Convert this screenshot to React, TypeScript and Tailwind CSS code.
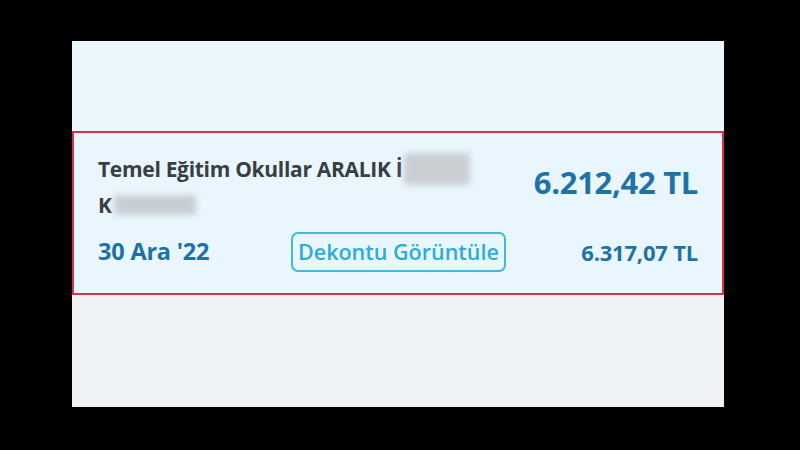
export default function App() {
  return (
    <div className="w-[800px] h-[450px] bg-black pl-[72px] pt-[41px]" style={{ fontFamily: '"Open Sans", "Noto Sans", sans-serif' }}>
      <div className="w-[652px] h-[366px] flex flex-col">
        {/* top strip */}
        <div className="h-[90px] bg-[#eaf7fd]" />

        {/* highlighted row */}
        <div className="h-[164px] bg-[#e9f6fd] border-2 border-[#d8304d] px-[24px] pt-[18px] flex flex-col">
          <div className="flex justify-between">
            <div className="text-[21px] leading-[36px] font-bold text-[#383e43] w-[380px] tracking-[-0.3px]">
              <div className="flex items-center whitespace-nowrap">
                Temel Eğitim Okullar ARALIK İ
                <span className="inline-block w-[66px] h-[32px] ml-[2px] bg-[#c9ced3] blur-[3px] rounded" />
              </div>
              <div className="flex items-center">
                K
                <span className="inline-block w-[82px] h-[20px] ml-[2px] bg-[#c9ced3] blur-[3px] rounded" />
              </div>
            </div>
            <div className="text-[31px] font-bold text-[#1f72a8] pt-[13px] leading-[36px] tracking-[-0.3px]">6.212,42 TL</div>
          </div>
          <div className="flex items-center justify-between mt-[9px]">
            <div className="text-[23.5px] font-bold text-[#1c72a8] w-[193px] tracking-[-0.2px]">30 Ara '22</div>
            <div className="border-2 border-[#43badb] rounded-[7px] px-[5px] h-[40px] flex items-center text-[21.5px] font-semibold text-[#2aaddc]">
              Dekontu Görüntüle
            </div>
            <div className="flex-1" />
            <div className="text-[22px] font-bold text-[#1f72a8] tracking-[-0.2px]">6.317,07 TL</div>
          </div>
        </div>

        {/* bottom area */}
        <div className="flex-1 bg-[#eff3f5]" />
      </div>
    </div>
  );
}
